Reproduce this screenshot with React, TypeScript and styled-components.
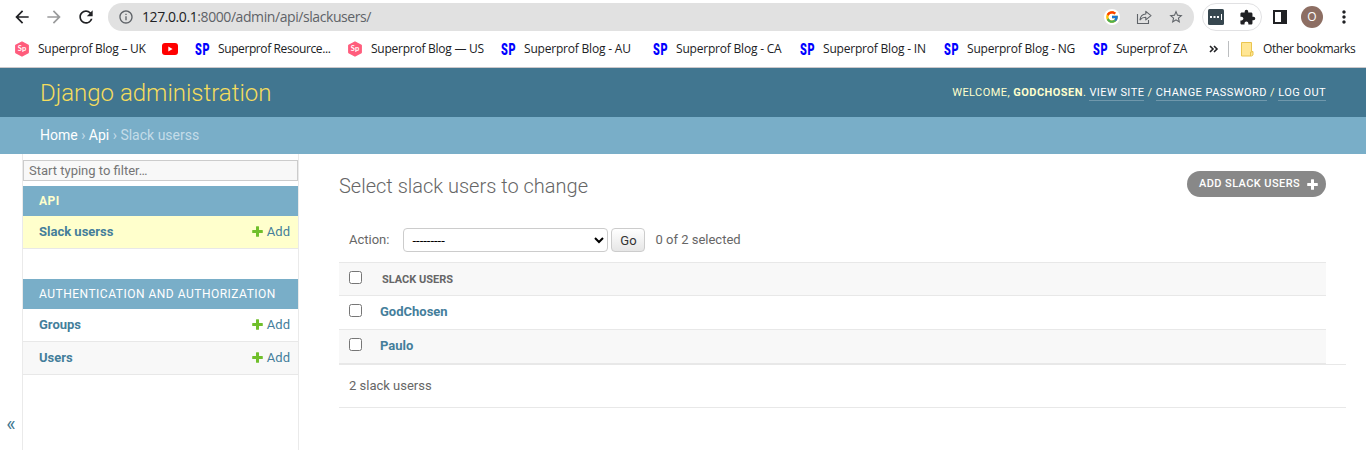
import React from "react";
import styled, { createGlobalStyle } from "styled-components";
import {
  MdArrowBack,
  MdArrowForward,
  MdRefresh,
  MdInfoOutline,
  MdStarBorder,
  MdExtension,
  MdMoreVert,
} from "react-icons/md";
import { FcGoogle } from "react-icons/fc";

const GlobalStyle = createGlobalStyle`
  *, *::before, *::after { box-sizing: border-box; }
  body {
    margin: 0;
    background: #fff;
    color: #666;
    font: 13px/16px Roboto, "Liberation Sans", sans-serif;
    overflow: hidden;
  }
  a { text-decoration: none; }
`;

const Page = styled.div`
  display: flex;
  flex-direction: column;
  height: 450px;
`;

/* Browser frame */

const BrowserBar = styled.div`
  flex: none;
  height: 68px;
  border-bottom: 1px solid #ccc8ca;
  background: #fff;
  font-family: "Open Sans", "Noto Sans", sans-serif;
`;

const Toolbar = styled.div`
  display: flex;
  align-items: center;
  height: 34px;
  padding-left: 12px;
`;

const NavIcon = styled.span<{ $dim?: boolean }>`
  display: flex;
  justify-content: center;
  width: 32px;
  margin-left: -6px;
  margin-right: 6px;
  color: ${(p) => (p.$dim ? "#9a9b9c" : "#202124")};
`;

const AddressBar = styled.div`
  display: flex;
  align-items: center;
  width: 1086px;
  height: 28px;
  padding: 0 10px;
  border-radius: 14px;
  background: #e1e1e1;
  color: #5f6368;
`;

const Url = styled.span`
  flex: 1;
  margin-left: 8px;
  font-size: 14px;
  letter-spacing: -0.42px;
  white-space: nowrap;
  b { font-weight: 400; color: #202124; }
`;

const GoogleBadge = styled.span`
  display: flex;
  align-items: center;
  justify-content: center;
  width: 16px;
  height: 16px;
  border-radius: 50%;
  background: #fff;
`;

const AddressAction = styled.span`
  display: flex;
  margin-left: 16px;
`;

const ExtensionPill = styled.div`
  display: flex;
  align-items: center;
  justify-content: space-between;
  width: 60px;
  height: 28px;
  margin-left: 8px;
  padding: 0 5px;
  border: 1px solid #e1e1e3;
  border-radius: 14px;
  color: #202124;
`;

const PanelButton = styled.span`
  display: flex;
  margin-left: 11px;
`;

const Avatar = styled.span`
  width: 22px;
  height: 22px;
  margin: 0 11px 0 14px;
  border-radius: 50%;
  background: #8d6e63;
  color: #fff;
  font-size: 12px;
  line-height: 22px;
  text-align: center;
`;

const Bookmarks = styled.div`
  display: flex;
  align-items: center;
  height: 30px;
  padding-left: 15px;
`;

const BookmarkItem = styled.span<{ $width: number; $tracking?: number }>`
  display: flex;
  align-items: center;
  flex: none;
  width: ${(p) => p.$width}px;
  gap: 9px;
  color: #202124;
  font-size: 12px;
  letter-spacing: ${(p) => p.$tracking ?? -0.2}px;
  white-space: nowrap;
  svg { flex: none; }
`;

const Overflow = styled.span`
  display: flex;
  width: 19px;
  color: #202124;
`;

const BookmarkDivider = styled.span`
  width: 1px;
  height: 16px;
  margin-right: 12px;
  background: #bcbec0;
`;

/* Admin header */

const Header = styled.header`
  flex: none;
  display: flex;
  align-items: center;
  justify-content: space-between;
  height: 49px;
  padding: 0 40px;
  background: #417690;
  color: #ffc;
`;

const SiteName = styled.h1`
  margin: 0;
  color: #f5dd5d;
  font-size: 24px;
  font-weight: 300;
  line-height: 28px;
`;

const UserTools = styled.div`
  padding-top: 1px;
  font-size: 11px;
  letter-spacing: 0.45px;
  line-height: 14px;
  text-transform: uppercase;
  a {
    display: inline-block;
    border-bottom: 1px solid rgba(255, 255, 255, 0.25);
    color: #fff;
  }
`;

const Breadcrumbs = styled.nav`
  flex: none;
  height: 37px;
  padding: 10px 40px;
  background: #79aec8;
  color: #c4dce8;
  font-size: 14px;
  line-height: 17px;
  a { color: #fff; }
`;

const Main = styled.div`
  display: flex;
  flex: 1;
  min-height: 0;
`;

/* Sidebar */

const SidebarToggle = styled.div`
  display: flex;
  align-items: flex-end;
  justify-content: center;
  width: 23px;
  padding-bottom: 16px;
  border-right: 1px solid #eaeaea;
  color: #417690;
  font-size: 20px;
  line-height: 20px;
`;

const Sidebar = styled.nav`
  width: 276px;
  padding-top: 6px;
  border-right: 1px solid #eaeaea;
`;

const FilterInput = styled.input`
  display: block;
  width: 275px;
  height: 21px;
  margin: 0 0 5px;
  padding: 0 5px;
  border: 1px solid #ccc;
  background: #f8f8f8;
  font: 13px Roboto, sans-serif;
  &::placeholder { color: #757575; }
`;

const AppModule = styled.section`
  margin-bottom: 30px;
`;

const AppCaption = styled.h2<{ $current?: boolean }>`
  height: 30px;
  margin: 0;
  padding: 8px 16px 0;
  background: #79aec8;
  color: ${(p) => (p.$current ? "#ffc" : "#fff")};
  font-size: 12px;
  font-weight: ${(p) => (p.$current ? 700 : 400)};
  letter-spacing: 0.5px;
  line-height: 14px;
  text-transform: uppercase;
  white-space: nowrap;
`;

const ModelRow = styled.div<{ $tone?: string }>`
  display: flex;
  justify-content: space-between;
  height: 33px;
  padding: 8px 8px 0 16px;
  border-bottom: 1px solid #e8e8e8;
  background: ${(p) => p.$tone || "#fff"};
  color: #447e9b;
`;

const AddLink = styled.a`
  display: flex;
  gap: 4px;
  color: #447e9b;
  svg { margin-top: 2px; }
`;

/* Change list */

const Content = styled.main`
  flex: 1;
  padding: 20px 20px 0 40px;
`;

const TitleRow = styled.div`
  display: flex;
  align-items: flex-start;
  justify-content: space-between;
  height: 54px;
  padding-right: 20px;
`;

const Title = styled.h2`
  margin: 0;
  font-size: 20px;
  font-weight: 300;
  line-height: 24px;
`;

const AddButton = styled.a`
  display: flex;
  justify-content: space-between;
  width: 139px;
  height: 26px;
  margin-top: -3px;
  padding: 6px 8px 0 12px;
  border-radius: 15px;
  background: #888;
  color: #fff;
  font-size: 11px;
  font-weight: 500;
  letter-spacing: 0.42px;
  line-height: 13px;
  text-transform: uppercase;
  white-space: nowrap;
  svg { margin-top: 2px; }
`;

const Actions = styled.div`
  display: flex;
  height: 34px;
  padding-left: 10px;
  line-height: 24px;
`;

const ActionSelect = styled.select`
  width: 205px;
  height: 24px;
  margin: 0 3px 0 14px;
  padding: 0 4px;
  border: 1px solid #ccc;
  border-radius: 4px;
  background: #fff;
  color: #000;
  font: 13px Roboto, sans-serif;
`;

const GoButton = styled.button`
  width: 34px;
  height: 24px;
  margin-right: 10px;
  padding: 1px 0 0;
  border: 1px solid #ccc;
  border-radius: 4px;
  background: linear-gradient(#fff, #e6e6e6);
  color: #333;
  font: 13px Roboto, sans-serif;
`;

const ResultRow = styled.div<{ $shade?: boolean; $head?: boolean }>`
  display: flex;
  align-items: flex-start;
  height: 34px;
  margin-right: 20px;
  padding: 8px 10px 0;
  border-top: ${(p) => (p.$head ? "1px solid #e8e8e8" : "0")};
  border-bottom: 1px solid #e8e8e8;
  background: ${(p) => (p.$shade ? "#f8f8f8" : "#fff")};
  color: #447e9b;
  font-weight: 700;
`;

const Checkbox = styled.input.attrs({ type: "checkbox" })`
  width: 13px;
  height: 13px;
  margin: 0 18px 0 0;
`;

const ColumnName = styled.span`
  padding: 1px 0 0 2px;
  color: #666;
  font-size: 11px;
  text-transform: uppercase;
`;

const Paginator = styled.div`
  height: 44px;
  padding: 13px 10px;
  border-top: 1px solid #e8e8e8;
  border-bottom: 1px solid #e8e8e8;
`;

const SuperprofIcon = () => (
  <svg width="14" height="16" viewBox="0 0 14 16">
    <path d="M7 1 13.2 4.4v7.2L7 15 .8 11.6V4.4Z" fill="#ff5c7c" stroke="#ff5c7c" strokeWidth="1.4" strokeLinejoin="round" />
    <text x="7" y="10.4" fill="#fff" fontFamily="Lato" fontWeight="700" fontSize="7.5" letterSpacing="0" textAnchor="middle">Sp</text>
  </svg>
);

const SpMark = styled.span`
  flex: none;
  width: 15px;
  margin-right: -1px;
  color: #00f;
  font: 900 17px/24px Roboto, sans-serif;
  letter-spacing: 1px;
  transform: scaleX(0.64);
  transform-origin: left;
`;

const SpIcon = () => <SpMark>SP</SpMark>;

const YoutubeIcon = () => (
  <svg width="16" height="12" viewBox="0 0 16 12">
    <rect width="16" height="12" rx="3" fill="#f00" />
    <path d="m6.3 3.5 4.3 2.5-4.3 2.5Z" fill="#fff" />
  </svg>
);

const FolderIcon = () => (
  <svg width="13" height="15" viewBox="0 0 13 15">
    <path d="M.5.5h10v9h1.5v3.5l-1.5 1H.5Z" fill="#ffe694" stroke="#eac54f" />
    <path d="M9.5 14V10h2" fill="none" stroke="#eac54f" />
  </svg>
);

const ShareIcon = () => (
  <svg width="16" height="16" viewBox="0 0 16 16" fill="none" stroke="#5f6368" strokeWidth="1.1">
    <path d="M1.5 5v9.5h11V11" />
    <path d="M4 10.8C4.4 7.2 6.5 5.2 9.8 5V2.3L15 6.6l-5.2 4.3V8.2C7.2 8.2 5.4 9 4 10.8Z" strokeLinejoin="round" />
  </svg>
);

const PasswordIcon = () => (
  <svg width="16" height="16" viewBox="0 0 16 16">
    <rect width="16" height="16" rx="1.5" fill="#37474f" />
    <path d="M2 7h2v2H2zM5.5 7h2v2h-2zM9 7h2v2H9zM13 5h1v6h-1z" fill="#fff" />
  </svg>
);

const SidePanelIcon = () => (
  <svg width="14" height="14" viewBox="0 0 14 14">
    <path d="M0 0h14v14H0ZM2 2v10h6V2Z" fill="#202124" fillRule="evenodd" />
  </svg>
);

const PlusIcon = ({ color }: { color: string }) => (
  <svg width="11" height="11" viewBox="0 0 11 11">
    <path
      d="M4.5.2h2q.5 0 .5.5V4h3.3q.5 0 .5.5v2q0 .5-.5.5H7v3.3q0 .5-.5.5h-2q-.5 0-.5-.5V7H.7Q.2 7 .2 6.500v-2Q.2 4 .7 4H4V.7q0-.5.5-.5Z"
      fill={color}
    />
  </svg>
);

const bookmarks = [
  { icon: <SuperprofIcon />, label: "Superprof Blog – UK", width: 147, tracking: -0.25 },
  { icon: <YoutubeIcon />, label: "", width: 33 },
  { icon: <SpIcon />, label: "Superprof Resource...", width: 153, tracking: -0.4 },
  { icon: <SuperprofIcon />, label: "Superprof Blog — US", width: 153, tracking: -0.25 },
  { icon: <SpIcon />, label: "Superprof Blog - AU", width: 152 },
  { icon: <SpIcon />, label: "Superprof Blog - CA", width: 147 },
  { icon: <SpIcon />, label: "Superprof Blog - IN", width: 144 },
  { icon: <SpIcon />, label: "Superprof Blog - NG", width: 149 },
  { icon: <SpIcon />, label: "Superprof ZA", width: 116, tracking: -0.25 },
];

const Model = ({ name, tone }: { name: string; tone?: string }) => (
  <ModelRow $tone={tone}>
    <b>{name}</b>
    <AddLink>
      <PlusIcon color="#70bf2b" />
      Add
    </AddLink>
  </ModelRow>
);

export default function App() {
  return (
    <Page>
      <GlobalStyle />
      <BrowserBar>
        <Toolbar>
          <NavIcon><MdArrowBack size={20} /></NavIcon>
          <NavIcon $dim><MdArrowForward size={20} /></NavIcon>
          <NavIcon><MdRefresh size={20} /></NavIcon>
          <AddressBar>
            <MdInfoOutline size={16} />
            <Url><b>127.0.0.1</b>:8000/admin/api/slackusers/</Url>
            <GoogleBadge><FcGoogle size={14} /></GoogleBadge>
            <AddressAction><ShareIcon /></AddressAction>
            <AddressAction><MdStarBorder size={16} /></AddressAction>
          </AddressBar>
          <ExtensionPill>
            <PasswordIcon />
            <MdExtension size={17} />
          </ExtensionPill>
          <PanelButton><SidePanelIcon /></PanelButton>
          <Avatar>O</Avatar>
          <MdMoreVert size={20} color="#202124" />
        </Toolbar>
        <Bookmarks>
          {bookmarks.map((b, i) => (
            <BookmarkItem key={i} $width={b.width} $tracking={b.tracking}>{b.icon}{b.label}</BookmarkItem>
          ))}
          <Overflow>
            <svg width="10" height="8" viewBox="0 0 10 8" fill="none" stroke="#202124" strokeWidth="1.6">
              <path d="m1 1 3 3-3 3M5 1l3 3-3 3" />
            </svg>
          </Overflow>
          <BookmarkDivider />
          <BookmarkItem $width={120} $tracking={-0.42}><FolderIcon />Other bookmarks</BookmarkItem>
        </Bookmarks>
      </BrowserBar>
      <Header>
        <SiteName>Django administration</SiteName>
        <UserTools>
          Welcome, <strong>GodChosen</strong>. <a>View site</a> / <a>Change password</a> / <a>Log out</a>
        </UserTools>
      </Header>
      <Breadcrumbs><a>Home</a> › <a>Api</a> › Slack userss</Breadcrumbs>
      <Main>
        <SidebarToggle>«</SidebarToggle>
        <Sidebar>
          <FilterInput placeholder="Start typing to filter…" />
          <AppModule>
            <AppCaption $current>Api</AppCaption>
            <Model name="Slack userss" tone="#ffc" />
          </AppModule>
          <AppModule>
            <AppCaption>Authentication and Authorization</AppCaption>
            <Model name="Groups" />
            <Model name="Users" tone="#f8f8f8" />
          </AppModule>
        </Sidebar>
        <Content>
          <TitleRow>
            <Title>Select slack users to change</Title>
            <AddButton>Add slack users <PlusIcon color="#fff" /></AddButton>
          </TitleRow>
          <Actions>
            Action:
            <ActionSelect><option>---------</option></ActionSelect>
            <GoButton>Go</GoButton>
            0 of 2 selected
          </Actions>
          <ResultRow $head $shade>
            <Checkbox />
            <ColumnName>Slack users</ColumnName>
          </ResultRow>
          <ResultRow><Checkbox />GodChosen</ResultRow>
          <ResultRow $shade><Checkbox />Paulo</ResultRow>
          <Paginator>2 slack userss</Paginator>
        </Content>
      </Main>
    </Page>
  );
}
